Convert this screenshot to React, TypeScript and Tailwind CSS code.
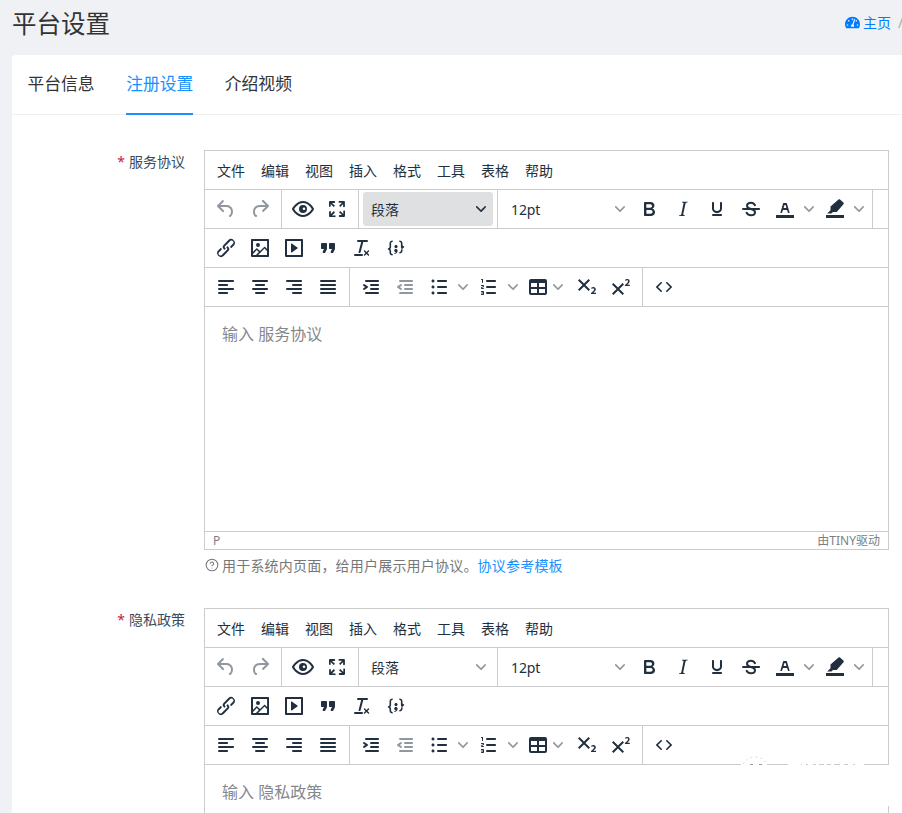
import React from "react";
import { FaTachometerAlt } from "react-icons/fa";
import { CircleHelp } from "lucide-react";

const P: Record<string, string> = {
  undo: "M6.4 8H12c3.7 0 6.2 2 6.8 5.1.6 2.7-.4 5.6-2.3 6.8a1 1 0 0 1-1-1.8c1.1-.6 1.8-2.7 1.4-4.6-.5-2.1-2.1-3.5-4.9-3.5H6.4l3.3 3.3a1 1 0 1 1-1.4 1.4l-5-5a1 1 0 0 1 0-1.4l5-5a1 1 0 0 1 1.4 1.4L6.4 8z",
  redo: "M17.6 10H12c-2.8 0-4.4 1.4-4.9 3.5-.4 2 .3 4 1.4 4.6a1 1 0 1 1-1 1.8c-2-1.2-2.9-4.1-2.3-6.8.6-3 3-5.1 6.8-5.1h5.6l-3.3-3.3a1 1 0 1 1 1.4-1.4l5 5a1 1 0 0 1 0 1.4l-5 5a1 1 0 0 1-1.4-1.4l3.3-3.3z",
  eye: "M3.5 12.5c.5.8 1.1 1.6 1.8 2.3 2 2 4.2 3.2 6.7 3.2s4.7-1.2 6.7-3.2a16.2 16.2 0 0 0 2.1-2.8 15.7 15.7 0 0 0-2.1-2.8c-2-2-4.2-3.2-6.7-3.2a9.3 9.3 0 0 0-6.7 3.2A16.2 16.2 0 0 0 3.2 12c0 .2.2.3.3.5zm-2.4-1l.7-1.2L4 7.8C6.2 5.4 8.9 4 12 4c3 0 5.8 1.4 8.1 3.8a18.2 18.2 0 0 1 2.8 3.7v1l-.7 1.2-2.1 2.5c-2.3 2.4-5 3.8-8.1 3.8-3 0-5.8-1.4-8.1-3.8a18.2 18.2 0 0 1-2.8-3.7 1 1 0 0 1 0-1zM12 16a4 4 0 1 1 0-8 4 4 0 0 1 0 8zm1-5.5a1.3 1.3 0 1 0 0 2.6 1.3 1.3 0 0 0 0-2.6z",
  full: "M15.3 10l-1.2-1.3 2.9-3h-2.3a.9.9 0 1 1 0-1.7H19c.5 0 .9.4.9.9v4.4a.9.9 0 1 1-1.8 0V7l-2.8 3zm0 4l3 3v-2.3a.9.9 0 1 1 1.7 0V19c0 .5-.4.9-.9.9h-4.4a.9.9 0 1 1 0-1.8H17l-3-2.9 1.3-1.2zM10 15.4l-2.9 3h2.3a.9.9 0 1 1 0 1.7H5a.9.9 0 0 1-.9-.9v-4.4a.9.9 0 1 1 1.8 0V17l2.9-3 1.2 1.4zM8.7 10L5.7 7v2.3a.9.9 0 0 1-1.7 0V5c0-.5.4-.9.9-.9h4.4a.9.9 0 0 1 0 1.8H7l3 2.9-1.3 1.2z",
  bold: "M7.8 19c-.3 0-.5 0-.6-.2l-.2-.5V5.7c0-.2 0-.4.2-.5l.6-.2h5c1.5 0 2.7.3 3.5 1 .7.6 1.1 1.4 1.1 2.5a3 3 0 0 1-.6 1.9c-.4.6-1 1-1.6 1.2.4.1.9.3 1.3.6s.8.7 1 1.2c.4.4.5 1 .5 1.6 0 1.3-.4 2.3-1.3 3-.8.7-2.1 1-3.8 1H7.8zm5-8.3c.6 0 1.2-.1 1.6-.5.4-.3.6-.7.6-1.3 0-1.1-.8-1.7-2.3-1.7H9.3v3.5h3.4zm.5 6c.7 0 1.3-.1 1.7-.4.4-.4.6-.9.6-1.5s-.2-1-.7-1.4c-.4-.3-1-.4-2-.4H9.4v3.7h3.9z",
  italic: "M16.7 4.7l-.1.9h-.3c-.6 0-1 0-1.4.3-.3.3-.4.6-.5 1.1l-2.1 9.8v.6c0 .5.4.8 1.4.8h.2l-.2.8H8l.2-.8h.2c1.1 0 1.8-.5 2-1.5l2-9.8.1-.5c0-.6-.4-.8-1.4-.8h-.3l.2-.9h5.8z",
  underline: "M16 5c.6 0 1 .4 1 1v5.5a4 4 0 0 1-.4 1.8l-1 1.4a5.3 5.3 0 0 1-5.5 1 5 5 0 0 1-1.6-1c-.5-.4-.8-.9-1.1-1.4a4 4 0 0 1-.4-1.8V6c0-.6.4-1 1-1s1 .4 1 1v5.5c0 .3 0 .6.2 1l.6.7a3.3 3.3 0 0 0 2.2.8 3.4 3.4 0 0 0 2.2-.8c.3-.2.4-.5.6-.8l.2-.9V6c0-.6.4-1 1-1zM8 17h8c.6 0 1 .4 1 1s-.4 1-1 1H8a1 1 0 0 1 0-2z",
  strikeLine: "M4 11h16c.6 0 1 .4 1 1s-.4 1-1 1H4a1 1 0 0 1 0-2z",
  textColor: "M3 18h18v3H3zM8.7 16h-.8a.5.5 0 0 1-.5-.6l2.7-9c.1-.3.3-.4.5-.4h2.8c.2 0 .4.1.5.4l2.7 9a.5.5 0 0 1-.5.6h-.8a.5.5 0 0 1-.4-.4l-.7-2.2c0-.3-.3-.4-.5-.4h-3.4c-.2 0-.4.1-.5.4l-.7 2.2c0 .3-.2.4-.4.4zm2.6-7.6l-.6 2a.5.5 0 0 0 .5.6h1.6a.5.5 0 0 0 .5-.6l-.6-2c0-.3-.3-.4-.5-.4h-.4c-.2 0-.4.1-.5.4z",
  highlight: "M3 18h18v3H3zM17 2.6l3.4 3c.5.5.5 1.2.1 1.7L13.7 15H10l-1.6 1.6H4.2l3.3-3.3V9.6l8-7c.5-.4 1-.4 1.5 0z",
  link: "M6.2 12.3a1 1 0 0 1 1.4 1.4l-2 2a2 2 0 1 0 2.6 2.8l4.8-4.8a1 1 0 0 0 0-1.4 1 1 0 1 1 1.4-1.3 2.9 2.9 0 0 1 0 4L9.6 20a3.9 3.9 0 0 1-5.5-5.5l2-2zm11.6-.6a1 1 0 0 1-1.4-1.4l2-2a2 2 0 1 0-2.6-2.8L11 10.3a1 1 0 0 0 0 1.4A1 1 0 1 1 9.6 13a2.9 2.9 0 0 1 0-4L14.4 4a3.9 3.9 0 0 1 5.5 5.5l-2 2z",
  image: "M5 15.7l3.3-3.2c.3-.3.7-.3 1 0L12 15l4.1-4c.3-.4.8-.4 1 0l2 1.9V5H5v10.7zM5 18v1h3l2.8-2.9-2-2L5 18zm14-3l-2.5-2.4-6.4 6.4H19v-4zM4 3h16c.6 0 1 .4 1 1v16c0 .6-.4 1-1 1H4a1 1 0 0 1-1-1V4c0-.6.4-1 1-1zm6 8a2 2 0 1 0 0-4 2 2 0 0 0 0 4z",
  media: "M4 3h16c.6 0 1 .4 1 1v16c0 .6-.4 1-1 1H4a1 1 0 0 1-1-1V4c0-.6.4-1 1-1zm1 2v14h14V5H5zm4.8 2.6l5.6 4a.5.5 0 0 1 0 .8l-5.6 4A.5.5 0 0 1 9 16V8a.5.5 0 0 1 .8-.4z",
  quote: "M7.5 17h.9c.4 0 .7-.2.9-.6L11 13V8c0-.6-.4-1-1-1H6a1 1 0 0 0-1 1v4c0 .6.4 1 1 1h2l-1.3 2.7a1 1 0 0 0 .8 1.3zm8 0h.9c.4 0 .7-.2.9-.6L19 13V8c0-.6-.4-1-1-1h-4a1 1 0 0 0-1 1v4c0 .6.4 1 1 1h2l-1.3 2.7a1 1 0 0 0 .8 1.3z",
  removeFmt: "M13.2 6a1 1 0 0 1 0 .2l-2.6 10a1 1 0 0 1-1 .8h-.2a.8.8 0 0 1-.8-1l2.6-10H8a1 1 0 1 1 0-2h9a1 1 0 0 1 0 2h-3.8zM5 18h7a1 1 0 0 1 0 2H5a1 1 0 0 1 0-2zm13 1.5L16.5 18 15 19.5a.7.7 0 0 1-1-1l1.5-1.5-1.5-1.5a.7.7 0 0 1 1-1l1.5 1.5 1.5-1.5a.7.7 0 0 1 1 1L17.5 17l1.5 1.5a.7.7 0 0 1-1 1z",
  codeSample: "M7.1 11a2.8 2.8 0 0 1-.8 2 2.8 2.8 0 0 1 .8 2v1.7c0 .3.1.6.4.8.2.3.5.4.8.4.3 0 .4.2.4.4v.8c0 .2-.1.4-.4.4-.7 0-1.4-.3-2-.8-.5-.6-.8-1.3-.8-2V15c0-.3-.1-.6-.4-.8-.2-.3-.5-.4-.8-.4a.4.4 0 0 1-.4-.4v-.8c0-.2.2-.4.4-.4.3 0 .6-.1.8-.4.3-.2.4-.5.4-.8V7.3c0-.7.3-1.4.8-2 .6-.5 1.3-.8 2-.8.3 0 .4.2.4.4v.8c0 .2-.1.4-.4.4-.3 0-.6.1-.8.4-.3.2-.4.5-.4.8V11zm9.8 0V7.3c0-.3-.1-.6-.4-.8-.2-.3-.5-.4-.8-.4a.4.4 0 0 1-.4-.4v-.8c0-.2.1-.4.4-.4.7 0 1.4.3 2 .8.5.6.8 1.3.8 2V9c0 .3.1.6.4.8.2.3.5.4.8.4.2 0 .4.2.4.4v.8c0 .2-.2.4-.4.4-.3 0-.6.1-.8.4-.3.2-.4.5-.4.8v1.7c0 .7-.3 1.4-.8 2-.6.5-1.3.8-2 .8a.4.4 0 0 1-.4-.4v-.8c0-.2.1-.4.4-.4.3 0 .6-.1.8-.4.3-.2.4-.5.4-.8V15a2.8 2.8 0 0 1 .8-2 2.8 2.8 0 0 1-.8-2zm-3.3-.4c0 .4-.1.8-.5 1.1-.3.3-.7.5-1.1.5-.4 0-.8-.2-1.1-.5-.4-.3-.5-.7-.5-1.1 0-.5.1-.9.5-1.2.3-.3.7-.4 1.1-.4.4 0 .8.1 1.1.4.4.3.5.7.5 1.2zM12 13c.4 0 .8.1 1.1.5.4.3.5.7.5 1.1 0 1-.1 1.6-.5 2a3 3 0 0 1-1.1 1c-.4.3-.8.4-1.1.4a.5.5 0 0 1-.5-.5V17a3 3 0 0 0 1-.2l.6-.6c-.6 0-1-.2-1.3-.5-.3-.3-.5-.7-.5-1 0-.5.1-1 .5-1.2.3-.4.7-.5 1.1-.5z",
  alignLeft: "M5 5h14c.6 0 1 .4 1 1s-.4 1-1 1H5a1 1 0 1 1 0-2zm0 4h8c.6 0 1 .4 1 1s-.4 1-1 1H5a1 1 0 1 1 0-2zm0 8h8c.6 0 1 .4 1 1s-.4 1-1 1H5a1 1 0 0 1 0-2zm0-4h14c.6 0 1 .4 1 1s-.4 1-1 1H5a1 1 0 0 1 0-2z",
  alignCenter: "M5 5h14c.6 0 1 .4 1 1s-.4 1-1 1H5a1 1 0 1 1 0-2zm3 4h8c.6 0 1 .4 1 1s-.4 1-1 1H8a1 1 0 1 1 0-2zm0 8h8c.6 0 1 .4 1 1s-.4 1-1 1H8a1 1 0 0 1 0-2zm-3-4h14c.6 0 1 .4 1 1s-.4 1-1 1H5a1 1 0 0 1 0-2z",
  alignRight: "M5 5h14c.6 0 1 .4 1 1s-.4 1-1 1H5a1 1 0 1 1 0-2zm6 4h8c.6 0 1 .4 1 1s-.4 1-1 1h-8a1 1 0 0 1 0-2zm0 8h8c.6 0 1 .4 1 1s-.4 1-1 1h-8a1 1 0 0 1 0-2zm-6-4h14c.6 0 1 .4 1 1s-.4 1-1 1H5a1 1 0 0 1 0-2z",
  alignJustify: "M5 5h14c.6 0 1 .4 1 1s-.4 1-1 1H5a1 1 0 1 1 0-2zm0 4h14c.6 0 1 .4 1 1s-.4 1-1 1H5a1 1 0 1 1 0-2zm0 4h14c.6 0 1 .4 1 1s-.4 1-1 1H5a1 1 0 0 1 0-2zm0 4h14c.6 0 1 .4 1 1s-.4 1-1 1H5a1 1 0 0 1 0-2z",
  indent: "M7 5h12c.6 0 1 .4 1 1s-.4 1-1 1H7a1 1 0 1 1 0-2zm5 4h7c.6 0 1 .4 1 1s-.4 1-1 1h-7a1 1 0 0 1 0-2zm0 4h7c.6 0 1 .4 1 1s-.4 1-1 1h-7a1 1 0 0 1 0-2zm-5 4h12a1 1 0 0 1 0 2H7a1 1 0 0 1 0-2zm-2.6-3.8L6.2 12l-1.8-1.2a1 1 0 0 1 1.2-1.6l3 2a1 1 0 0 1 0 1.6l-3 2a1 1 0 1 1-1.2-1.6z",
  outdent: "M7 5h12c.6 0 1 .4 1 1s-.4 1-1 1H7a1 1 0 1 1 0-2zm5 4h7c.6 0 1 .4 1 1s-.4 1-1 1h-7a1 1 0 0 1 0-2zm0 4h7c.6 0 1 .4 1 1s-.4 1-1 1h-7a1 1 0 0 1 0-2zm-5 4h12a1 1 0 0 1 0 2H7a1 1 0 0 1 0-2zm1.6-3.8a1 1 0 0 1-1.2 1.6l-3-2a1 1 0 0 1 0-1.6l3-2a1 1 0 0 1 1.2 1.6L6.8 12l1.8 1.2z",
  bullet: "M11 5h8c.6 0 1 .4 1 1s-.4 1-1 1h-8a1 1 0 0 1 0-2zm0 6h8c.6 0 1 .4 1 1s-.4 1-1 1h-8a1 1 0 0 1 0-2zm0 6h8c.6 0 1 .4 1 1s-.4 1-1 1h-8a1 1 0 0 1 0-2zM4.5 6c0-.4.1-.8.4-1 .3-.4.7-.5 1.1-.5.4 0 .8.1 1 .4.4.3.5.7.5 1.1 0 .4-.1.8-.4 1-.3.4-.7.5-1.1.5-.4 0-.8-.1-1-.4-.4-.3-.5-.7-.5-1.1zm0 6c0-.4.1-.8.4-1 .3-.4.7-.5 1.1-.5.4 0 .8.1 1 .4.4.3.5.7.5 1.1 0 .4-.1.8-.4 1-.3.4-.7.5-1.1.5-.4 0-.8-.1-1-.4-.4-.3-.5-.7-.5-1.1zm0 6c0-.4.1-.8.4-1 .3-.4.7-.5 1.1-.5.4 0 .8.1 1 .4.4.3.5.7.5 1.1 0 .4-.1.8-.4 1-.3.4-.7.5-1.1.5-.4 0-.8-.1-1-.4-.4-.3-.5-.7-.5-1.1z",
  numbered: "M10 17h8c.6 0 1 .4 1 1s-.4 1-1 1h-8a1 1 0 0 1 0-2zm0-6h8c.6 0 1 .4 1 1s-.4 1-1 1h-8a1 1 0 0 1 0-2zm0-6h8c.6 0 1 .4 1 1s-.4 1-1 1h-8a1 1 0 1 1 0-2zM6 4v3.5c0 .3-.2.5-.5.5a.5.5 0 0 1-.5-.5V5h-.5a.5.5 0 0 1 0-1H6zm-1 8.8l.2.2h1.3c.3 0 .5.2.5.5s-.2.5-.5.5H4.9a1 1 0 0 1-.9-1V13c0-.4.3-.8.6-1l1.2-.4.2-.3a.2.2 0 0 0-.2-.2H4.5a.5.5 0 0 1-.5-.5c0-.3.2-.5.5-.5h1.6c.5 0 .9.4.9 1v.1c0 .4-.3.8-.6 1l-1.2.4-.2.3zM7 17v2c0 .6-.4 1-1 1H4.5a.5.5 0 0 1 0-1h1.2c.2 0 .3-.1.3-.3 0-.2-.1-.3-.3-.3H4.4a.4.4 0 1 1 0-.8h1.3c.2 0 .3-.1.3-.3 0-.2-.1-.3-.3-.3H4.5a.5.5 0 1 1 0-1H6c.6 0 1 .4 1 1v.6z",
  table: "M19 4a2 2 0 0 1 2 2v12a2 2 0 0 1-2 2H5a2 2 0 0 1-2-2V6c0-1.1.9-2 2-2h14zM5 14v4h6v-4H5zm14 0h-6v4h6v-4zm0-6h-6v4h6V8zM5 12h6V8H5v4z",
  sub: "M10.4 10l4.6 4.6-1.4 1.4L9 11.4 4.4 16 3 14.6 7.6 10 3 5.4 4.4 4 9 8.6 13.6 4 15 5.4 10.4 10zM21 19h-5v-1l1-.8 1.7-1.6c.3-.4.5-.8.5-1.2 0-.3 0-.6-.2-.7-.2-.2-.5-.3-.9-.3a2 2 0 0 0-.8.2l-.7.3-.4-1.1 1-.6 1.2-.2c.8 0 1.4.3 1.8.7.4.4.6.9.6 1.5s-.2 1.1-.5 1.6a8 8 0 0 1-1.3 1.3l-.6.6h2.6V19z",
  sup: "M15 9.4L10.4 14l4.6 4.6-1.4 1.4L9 15.4 4.4 20 3 18.6 7.6 14 3 9.4 4.4 8 9 12.6 13.6 8 15 9.4zm5.9 1.6h-5v-1l1-.8 1.7-1.6c.3-.5.5-.9.5-1.3 0-.3 0-.5-.2-.7-.2-.2-.5-.3-.9-.3l-.8.2-.7.4-.4-1.2c.2-.2.5-.4 1-.5.3-.2.8-.2 1.2-.2.7 0 1.3.2 1.7.6.4.4.6.9.6 1.5s-.2 1.2-.5 1.7l-1.3 1.4-.6.5h2.6V11z",
  source: "M9.8 15.7c.3.3.3.8 0 1-.3.4-.9.4-1.2 0l-4.4-4.1a.8.8 0 0 1 0-1.2l4.4-4.2c.3-.3.9-.3 1.2 0 .3.3.3.8 0 1.1L6 12l3.8 3.7zm4.4 0L18 12l-3.8-3.7a.7.7 0 0 1 0-1c.3-.4.9-.4 1.2 0l4.4 4.1c.3.3.3.9 0 1.2l-4.4 4.2c-.3.3-.9.3-1.2 0a.8.8 0 0 1 0-1z",
};

function Glyph({ name, off }: { name: string; off?: boolean }) {
  return (
    <svg width="24" height="24" viewBox="0 0 24 24" className={off ? "fill-[#222f3e]/50" : "fill-[#222f3e]"}>
      <path d={P[name]} fillRule="evenodd" />
      {name === "strikeLine" && (
        <path d="M16 8.2c-.8-1.5-2.2-2.4-4.1-2.4-2.3 0-3.9 1.2-3.9 3 0 2.2 2 2.8 4 3.2 2.2.5 4 1.2 4 3.2 0 1.8-1.7 3-4 3-2 0-3.6-.9-4.4-2.4" fill="none" stroke="#222f3e" strokeWidth="2" strokeLinecap="round" />
      )}
    </svg>
  );
}

function Chevron({ dark }: { dark?: boolean }) {
  return (
    <svg width="10" height="10" viewBox="0 0 10 10" className={dark ? "fill-[#222f3e]" : "fill-[#222f3e]/50"}>
      <path d="M8.7 2.2c.3-.3.8-.3 1 0 .4.4.4.9 0 1.2L5.7 7.8c-.3.3-.9.3-1.2 0L.2 3.4a.8.8 0 0 1 0-1.2c.3-.3.8-.3 1.1 0L5 6l3.7-3.8z" />
    </svg>
  );
}

function Btn({ name, off }: { name: string; off?: boolean }) {
  return (
    <div className="my-[2px] flex h-[34px] w-[34px] items-center justify-center">
      <Glyph name={name} off={off} />
    </div>
  );
}

function Split({ name, gap }: { name: string; gap?: boolean }) {
  return (
    <div className={`flex ${gap ? "mr-[2px]" : ""}`}>
      <Btn name={name} />
      <div className="my-[2px] flex h-[34px] w-[14px] items-center justify-center">
        <Chevron />
      </div>
    </div>
  );
}

function Select({ text, focused, latin }: { text: string; focused?: boolean; latin?: boolean }) {
  return (
    <div className={`my-[2px] flex h-[34px] w-[130px] items-center justify-between pr-[7px] text-[14px] text-[#222f3e] rounded-[3px] ${focused ? "bg-[#dee0e2]" : ""} ${latin ? "pl-[9px] tracking-[-0.1px]" : "pl-[8px]"}`}>
      <span>{text}</span>
      <Chevron dark={focused} />
    </div>
  );
}

const Group = ({ children, last }: { children: React.ReactNode; last?: boolean }) => (
  <div className={`flex px-1 ${last ? "" : "border-r border-[#ccc]"}`}>{children}</div>
);

const MENU = ["文件", "编辑", "视图", "插入", "格式", "工具", "表格", "帮助"];

function Editor({ placeholder, focused, artifact }: { placeholder: string; focused?: boolean; artifact?: boolean }) {
  return (
    <div className="relative flex h-[400px] flex-col border border-[#ccc] bg-white">
      <div className="flex h-[39px] shrink-0 items-center border-b border-[#ccc] pl-[4px] text-[14px] text-[#222f3e]">
        {MENU.map((m) => (
          <span key={m} className="w-[44px] text-center">{m}</span>
        ))}
      </div>
      <div className="flex h-[39px] shrink-0 border-b border-[#ccc]">
        <Group>
          <Btn name="undo" off />
          <Btn name="redo" off />
        </Group>
        <Group>
          <Btn name="eye" />
          <Btn name="full" />
        </Group>
        <Group>
          <Select text="段落" focused={focused} />
        </Group>
        <Group>
          <Select text="12pt" latin />
          <Btn name="bold" />
          <Btn name="italic" />
          <Btn name="underline" />
          <Btn name="strikeLine" />
          <Split name="textColor" gap />
          <Split name="highlight" gap />
        </Group>
      </div>
      <div className="flex h-[39px] shrink-0 border-b border-[#ccc]">
        <Group last>
          <Btn name="link" />
          <Btn name="image" />
          <Btn name="media" />
          <Btn name="quote" />
          <Btn name="removeFmt" />
          <Btn name="codeSample" />
        </Group>
      </div>
      <div className="flex h-[39px] shrink-0 border-b border-[#ccc]">
        <Group>
          <Btn name="alignLeft" />
          <Btn name="alignCenter" />
          <Btn name="alignRight" />
          <Btn name="alignJustify" />
        </Group>
        <Group>
          <Btn name="indent" />
          <Btn name="outdent" off />
          <Split name="bullet" gap />
          <Split name="numbered" gap />
          <div className="my-[2px] flex h-[34px] w-[48px] items-center pl-[4px]">
            <Glyph name="table" />
            <span className="ml-[3px] flex"><Chevron /></span>
          </div>
          <Btn name="sub" />
          <Btn name="sup" />
        </Group>
        <Group last>
          <Btn name="source" />
        </Group>
      </div>
      <div className="flex-1 pl-[17px] pt-[15px] text-[16px] leading-[24px] text-[#84878c]">{placeholder}</div>
      <div className="flex h-[18px] shrink-0 items-center justify-between border-t border-[#ccc] pl-[8px] pr-[8px] text-[12px] text-[#7a7f85]">
        <span>P</span>
        <span>由TINY驱动</span>
      </div>
      {artifact && (
        <div className="absolute right-[-1px] top-[147px] h-[50px] w-[148px]">
          <div className="absolute inset-x-0 bottom-0 top-[8px] bg-white" />
          <svg width="148" height="10" viewBox="0 0 148 10" className="absolute left-0 top-0 block">
            <path d="M26 8.5h21M60 8.5h1M65 8.5h2M72 8.5h3M78 8.5h5M86 8.5h4M93 8.5h6M103 8.5h4M112 8.5h2M123 8.5h25" stroke="#ccc" strokeWidth="1" />
            <path d="M2 8C5 3 9 1 14 1s9 2 12 7" fill="none" stroke="#ddd" strokeWidth="1" strokeDasharray="2 3" />
            <path d="M9 8.5h3M18 8.5h3" stroke="#999" strokeWidth="1" />
          </svg>
        </div>
      )}
    </div>
  );
}

function Field({ label, placeholder, focused, artifact, help }: { label: string; placeholder: string; focused?: boolean; artifact?: boolean; help?: boolean }) {
  return (
    <div className="grid grid-cols-[192px_685px]">
      <div className="flex h-[22px] items-center justify-end pr-[19px] text-[14px] text-[#3a4a5c]">
        <span className="mr-[4px] text-[#c0234a]">*</span>
        <span>{label}</span>
      </div>
      <div>
        <Editor placeholder={placeholder} focused={focused} artifact={artifact} />
        {help && (
          <div className="mb-[33px] mt-[5px] flex h-[20px] items-center text-[14px] tracking-[0.2px] text-[#777]">
            <CircleHelp size={14} strokeWidth={1.8} className="ml-[1px] mr-[3px] shrink-0" />
            <span>用于系统内页面，给用户展示用户协议。</span>
            <span className="text-[#1890ff]">协议参考模板</span>
          </div>
        )}
      </div>
    </div>
  );
}

export default function App() {
  return (
    <div className="h-[813px] overflow-hidden bg-[#f0f1f5] font-['Noto_Sans','Noto_Sans_CJK_SC',sans-serif]">
      <div className="flex h-[55px] items-start justify-between pl-[12px]">
        <h1 className="pt-[6px] text-[24.5px] font-normal leading-[36px] text-[#333]">平台设置</h1>
        <div className="flex h-[44px] items-center whitespace-nowrap text-[14px] text-[#007bff]">
          <FaTachometerAlt size={15} className="mr-[3px]" />
          <span>主页</span>
          <span className="ml-[7px] w-[4px] overflow-hidden text-[#aaa]">/</span>
        </div>
      </div>
      <div className="ml-[12px] rounded-tl-[4px] bg-white">
        <div className="flex h-[60px] gap-[31.5px] border-b border-[#f0f0f0] pl-[15.5px] text-[16.8px]">
          <div className="flex h-[60px] items-center pb-[2px] text-[#333]">平台信息</div>
          <div className="flex h-[60px] items-center border-b-2 border-[#1890ff] text-[#1890ff]">注册设置</div>
          <div className="flex h-[60px] items-center pb-[2px] text-[#333]">介绍视频</div>
        </div>
        <div className="pt-[35px]">
          <Field label="服务协议" placeholder="输入 服务协议" focused help />
          <Field label="隐私政策" placeholder="输入 隐私政策" artifact />
        </div>
      </div>
    </div>
  );
}
